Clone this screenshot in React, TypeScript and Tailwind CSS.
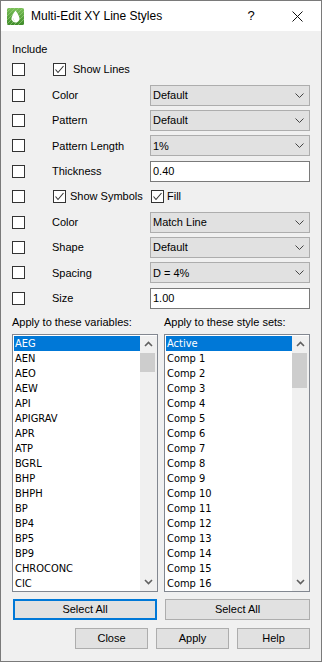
import React from "react";

const FONT = { fontFamily: '"Liberation Sans", Arial, sans-serif' };
const LIST_FONT = {
  fontFamily: '"DejaVu Sans Condensed", "DejaVu Sans", "Liberation Sans", sans-serif',
  fontStretch: "condensed",
};

const Check = ({ checked }: { checked?: boolean }) => (
  <div className="w-[13px] h-[13px] border border-[#333333] bg-white flex items-center justify-center shrink-0">
    {checked && (
      <svg width="11" height="11" viewBox="0 0 11 11">
        <path d="M1.5 5.5 L4 8.5 L9.5 2" fill="none" stroke="#333333" strokeWidth="1.1" />
      </svg>
    )}
  </div>
);

const Chevron = () => (
  <svg width="9" height="5" viewBox="0 0 9 5">
    <path d="M0.5 0.5 L4.5 4.5 L8.5 0.5" fill="none" stroke="#444444" strokeWidth="1" />
  </svg>
);

const Combo = ({ value }: { value: string }) => (
  <div className="w-[160px] h-[21px] border border-[#adadad] bg-[#e1e1e1] flex items-center pl-[2px] pr-[5px]">
    <span className="flex-1 text-black">{value}</span>
    <Chevron />
  </div>
);

const Input = ({ value }: { value: string }) => (
  <div className="w-[160px] h-[21px] border border-[#7a7a7a] bg-white flex items-center pl-[2px]">
    <span className="text-black">{value}</span>
  </div>
);

const Row = ({ children }: { children: React.ReactNode }) => (
  <div className="h-[25.4px] flex items-center">
    <div className="w-[40px] flex items-center">
      <Check />
    </div>
    {children}
  </div>
);

const Label = ({ text }: { text: string }) => (
  <div className="w-[98px] text-black">{text}</div>
);

const ScrollArrow = ({ up }: { up?: boolean }) => (
  <div className="h-[17px] w-full flex items-center justify-center">
    <svg width="9" height="6" viewBox="0 0 9 6">
      <path
        d={up ? "M1 5 L4.5 1.5 L8 5" : "M1 1 L4.5 4.5 L8 1"}
        fill="none"
        stroke="#606060"
        strokeWidth="1.6"
      />
    </svg>
  </div>
);

const ListBox = ({ items, thumbH }: { items: string[]; thumbH: number }) => (
  <div className="w-[146px] h-[258px] border border-[#828790] bg-white flex pt-px pl-px">
    <div className="w-[126px] flex flex-col" style={LIST_FONT}>
      {items.map((it, i) => (
        <div
          key={it}
          className={
            "h-[15px] leading-[15px] pl-px text-[11px] " +
            (i === 0 ? "bg-[#0078d7] text-white" : "text-black")
          }
        >
          {it}
        </div>
      ))}
    </div>
    <div className="w-[17px] h-[255px] bg-[#f0f0f0] flex flex-col">
      <ScrollArrow up />
      <div className="w-[15px] bg-[#cdcdcd]" style={{ height: thumbH }} />
      <div className="flex-1" />
      <ScrollArrow />
    </div>
  </div>
);

const Button = ({ label, w, focused }: { label: string; w: string; focused?: boolean }) => (
  <div
    className={
      "h-[21px] bg-[#e1e1e1] flex items-center justify-center text-black " +
      w +
      (focused ? " border-2 border-[#0078d7]" : " border border-[#adadad]")
    }
  >
    {label}
  </div>
);

const vars = [
  "AEG", "AEN", "AEO", "AEW", "API", "APIGRAV", "APR", "ATP", "BGRL", "BHP",
  "BHPH", "BP", "BP4", "BP5", "BP9", "CHROCONC", "CIC",
];
const sets = ["Active", ...Array.from({ length: 16 }, (_, i) => `Comp ${i + 1}`)];

export default function App() {
  return (
    <div
      className="w-[322px] h-[662px] border border-[#7a7a7a] bg-[#f0f0f0] flex flex-col text-[11px] overflow-hidden"
      style={FONT}
    >
      <div className="h-[30px] bg-white flex items-center shrink-0">
        <div className="ml-[6px] w-[17px] h-[17px]">
          <svg width="17" height="17" viewBox="0 0 17 17">
            <defs>
              <linearGradient id="g" x1="0" y1="0" x2="0" y2="1">
                <stop offset="0" stopColor="#7cc05a" />
                <stop offset="1" stopColor="#3f8b2b" />
              </linearGradient>
              <clipPath id="c">
                <rect x="0" y="0" width="17" height="17" rx="1.5" />
              </clipPath>
            </defs>
            <rect x="0" y="0" width="17" height="17" rx="1.5" fill="url(#g)" />
            <g clipPath="url(#c)" stroke="#9fd680" strokeWidth="1" opacity="0.6">
              <path d="M-2 6 L6 -2 M-2 10 L10 -2 M-2 14 L14 -2 M-2 18 L18 -2 M2 18 L18 2 M6 18 L18 6 M10 18 L18 10" />
            </g>
            <path d="M8.5 2.5 C8.5 2.5 4.5 8 4.5 10.5 C4.5 12.8 6.3 14.5 8.5 14.5 C10.7 14.5 12.5 12.8 12.5 10.5 C12.5 8 8.5 2.5 8.5 2.5 Z" fill="#ffffff" />
            <path d="M6.3 10.3 C6.3 12 7.2 12.8 8 13" fill="none" stroke="#cfe9bf" strokeWidth="0.9" />
          </svg>
        </div>
        <span className="ml-[7px] text-[12px] text-black flex-1">Multi-Edit XY Line Styles</span>
        <span className="text-[13px] text-black w-[12px] text-center mr-[35px]">?</span>
        <svg width="11" height="11" viewBox="0 0 11 11" className="mr-[18px]">
          <path d="M0.5 0.5 L10.5 10.5 M10.5 0.5 L0.5 10.5" stroke="#111" strokeWidth="1" />
        </svg>
      </div>

      <div className="flex-1 flex flex-col px-[11px] pt-[11px]">
        <div className="h-[14px] leading-[14px] text-black">Include</div>
        <div className="mt-px flex flex-col">
          <Row>
            <div className="ml-px flex items-center">
              <Check checked />
              <span className="ml-[7px] text-black">Show Lines</span>
            </div>
          </Row>
          <Row>
            <Label text="Color" />
            <Combo value="Default" />
          </Row>
          <Row>
            <Label text="Pattern" />
            <Combo value="Default" />
          </Row>
          <Row>
            <Label text="Pattern Length" />
            <Combo value="1%" />
          </Row>
          <Row>
            <Label text="Thickness" />
            <Input value="0.40" />
          </Row>
          <Row>
            <div className="w-[98px] flex items-center">
              <div className="ml-px flex items-center">
                <Check checked />
                <span className="ml-[4px] text-black">Show Symbols</span>
              </div>
            </div>
            <div className="ml-px flex items-center">
              <Check checked />
              <span className="ml-[3px] text-black">Fill</span>
            </div>
          </Row>
          <Row>
            <Label text="Color" />
            <Combo value="Match Line" />
          </Row>
          <Row>
            <Label text="Shape" />
            <Combo value="Default" />
          </Row>
          <Row>
            <Label text="Spacing" />
            <Combo value="D = 4%" />
          </Row>
          <Row>
            <Label text="Size" />
            <Input value="1.00" />
          </Row>
        </div>

        <div className="mt-[4px] h-[14px] leading-[14px] flex text-black">
          <div className="w-[152px]">Apply to these variables:</div>
          <div>Apply to these style sets:</div>
        </div>

        <div className="mt-[5px] flex gap-[6px]">
          <ListBox items={vars} thumbH={19} />
          <ListBox items={sets} thumbH={35} />
        </div>

        <div className="mt-[7px] flex">
          <div className="ml-px">
            <Button label="Select All" w="w-[144px]" focused />
          </div>
          <div className="ml-[8px]">
            <Button label="Select All" w="w-[145px]" />
          </div>
        </div>

        <div className="mt-[8px] flex justify-end gap-[8px]">
          <Button label="Close" w="w-[73px]" />
          <Button label="Apply" w="w-[73px]" />
          <Button label="Help" w="w-[73px]" />
        </div>
      </div>
    </div>
  );
}
